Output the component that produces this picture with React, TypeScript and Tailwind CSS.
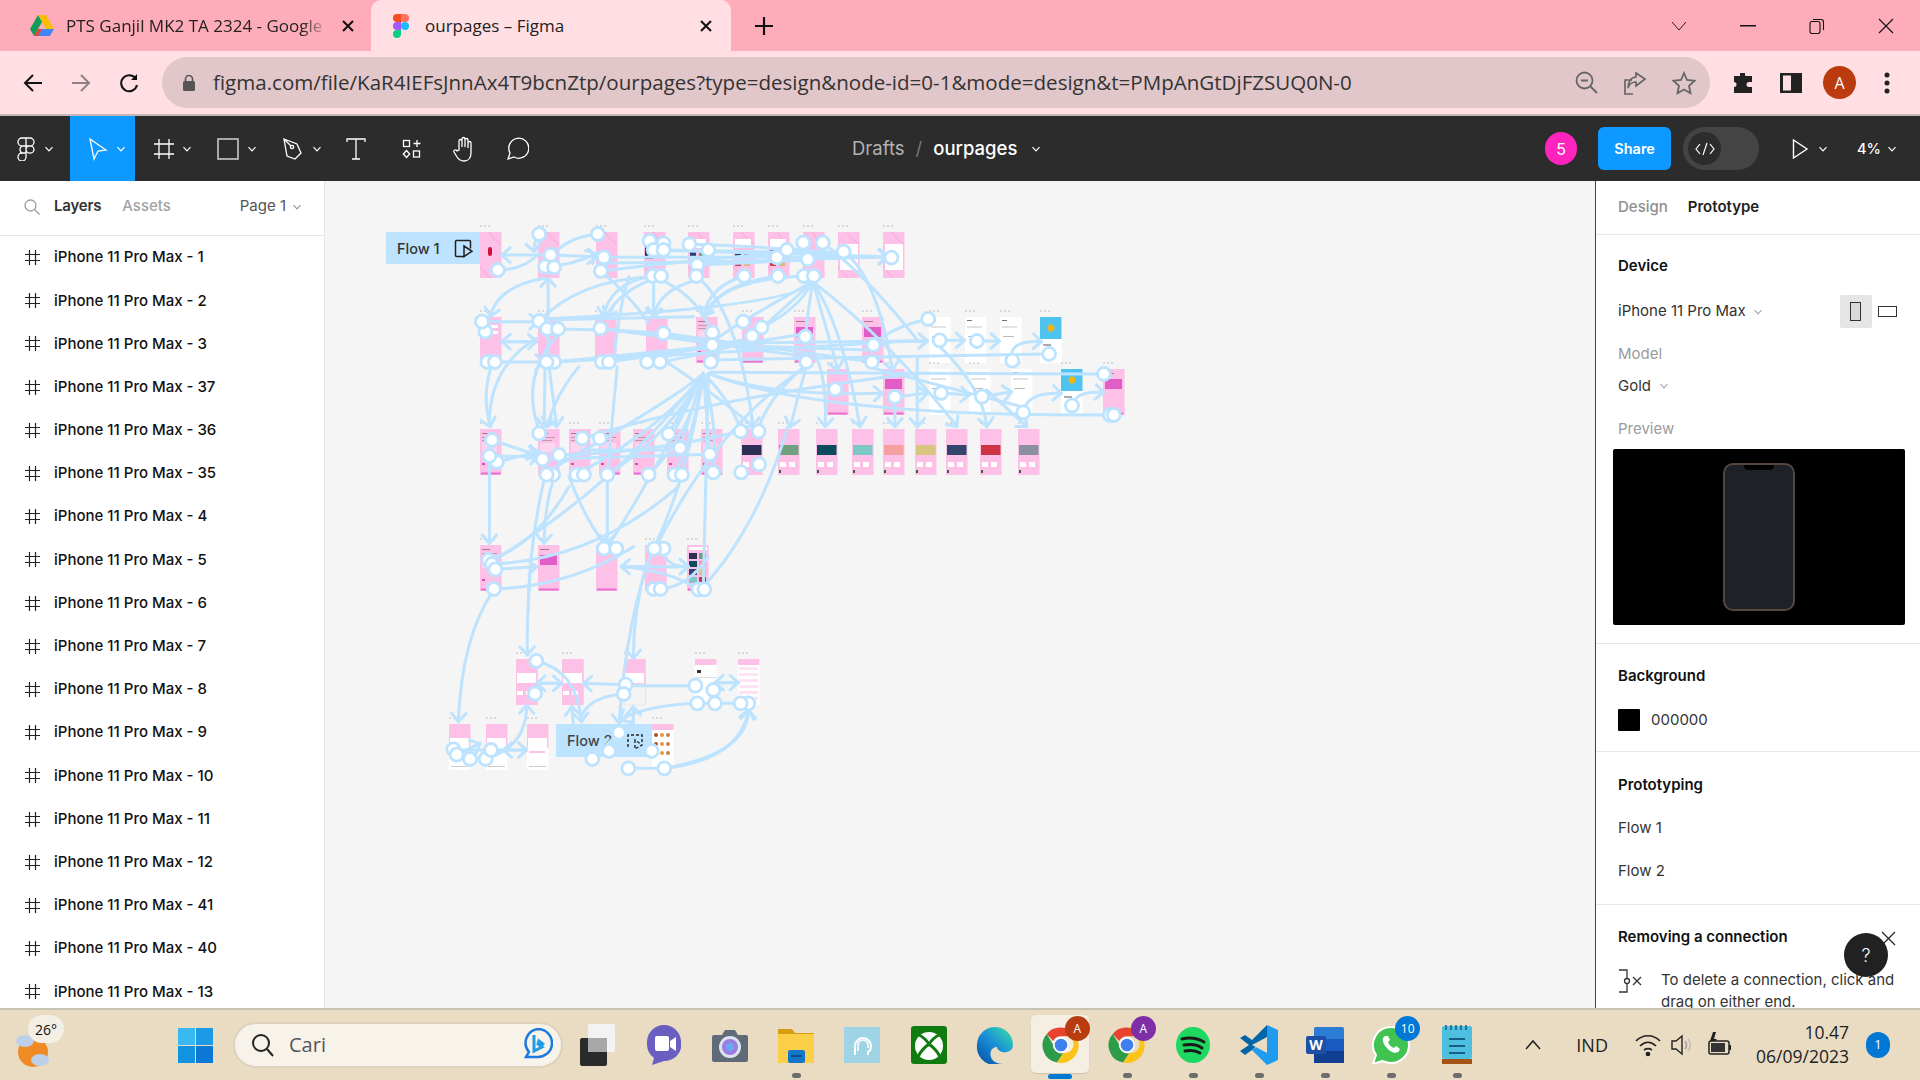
import React from "react";

const sans = "font-['Open_Sans',sans-serif]";
const inter = "font-[Inter,sans-serif]";

type C = [number, number, number, number, number, number, number?];
const z3x = (x: number) => 370 + x / 2.01;
const z3y = (y: number) => 210 + y / 3;
const z5x = (x: number) => 420 + x / 3;
const z5y = (y: number) => 520 + y / 3;

const L = (a: number, b: number, c: number, d: number, arrow = 1): C => [a, b, (a + c) / 2, (b + d) / 2, c, d, arrow];

const curves3: C[] = [
  L(355, 135, 265, 135), [257, 180, 310, 180, 340, 130, 0], [340, 72, 328, 100, 330, 125, 1], [458, 72, 380, 85, 355, 165, 0],
  L(363, 135, 455, 140), [352, 170, 410, 165, 455, 130, 1], L(470, 142, 1040, 142), L(570, 120, 1040, 140), [464, 183, 650, 150, 820, 130, 0],
  L(590, 120, 950, 130, 0), [642, 103, 800, 110, 950, 130, 0], L(880, 148, 1040, 140), L(470, 160, 880, 150, 0), L(660, 165, 880, 150, 0),
  [568, 198, 480, 220, 470, 320, 1], [585, 198, 500, 240, 475, 320, 1], L(570, 205, 570, 320), [656, 210, 580, 240, 570, 320, 1],
  [752, 198, 680, 230, 670, 320, 1], [820, 198, 700, 220, 670, 320, 1], [872, 198, 700, 210, 680, 310, 0], [892, 210, 870, 290, 340, 328, 0],
  [890, 215, 700, 370, 688, 400, 0], [890, 215, 800, 340, 768, 378, 0], [890, 215, 860, 300, 787, 352, 0], [890, 215, 880, 300, 875, 380, 0],
  [890, 215, 950, 350, 985, 650, 1], [890, 215, 930, 420, 940, 480, 1], [890, 215, 1050, 400, 1180, 650, 1], [910, 98, 1000, 200, 1100, 390, 0],
  [952, 125, 1020, 200, 1050, 480, 1], [1122, 327, 1050, 350, 1010, 405, 0], [656, 198, 740, 300, 770, 650, 1], [568, 200, 680, 260, 700, 440, 0],
  [520, 200, 500, 300, 490, 450, 0], [470, 190, 530, 270, 560, 340, 0], [350, 205, 255, 230, 242, 320, 1], L(358, 455, 358, 205), [340, 333, 420, 210, 565, 200, 0],
  L(225, 335, 338, 335), L(340, 330, 650, 320, 0), L(265, 395, 335, 395), L(335, 395, 265, 395), L(251, 456, 350, 456),
  [370, 456, 600, 440, 880, 370, 0], L(370, 456, 750, 400, 0), L(370, 456, 1010, 400, 0), L(378, 357, 460, 360, 0), L(460, 358, 590, 370, 0), L(590, 370, 688, 405, 0), L(688, 400, 1120, 392),
  L(463, 355, 880, 440, 0), L(463, 355, 690, 400, 0), [480, 456, 600, 430, 750, 390, 0], [583, 456, 650, 440, 750, 400, 0], [557, 456, 650, 420, 690, 390, 0],
  L(590, 370, 1010, 456, 0), L(688, 405, 1000, 420, 0), [1012, 405, 1050, 390, 1120, 395, 1], L(1145, 391, 1195, 391), L(1220, 393, 1265, 393),
  [1291, 452, 1280, 390, 1350, 395, 1], L(680, 450, 1365, 432, 0), L(685, 487, 1475, 492, 0), [680, 490, 900, 620, 1487, 615, 0], [680, 490, 800, 560, 1030, 550, 1],
  L(1055, 561, 1120, 549), L(1148, 549, 1205, 555), L(1230, 560, 1290, 545), [1313, 607, 1320, 545, 1390, 550, 1], [1411, 587, 1420, 540, 1475, 548, 1],
  [1145, 410, 1230, 530, 1240, 650, 1], L(1240, 540, 1320, 650), L(1100, 440, 1100, 650), L(1055, 580, 1055, 650), L(1000, 470, 1310, 590, 0),
  [875, 400, 920, 450, 915, 650, 1], [877, 470, 860, 560, 845, 650, 1], [670, 490, 620, 560, 350, 790, 0], [670, 490, 600, 640, 415, 794, 0], [670, 490, 600, 680, 477, 794, 0],
  [670, 490, 640, 680, 560, 794, 0], [670, 490, 650, 680, 612, 794, 0], L(670, 490, 600, 672, 0), L(670, 490, 623, 714, 0), L(670, 490, 683, 733, 0), [670, 490, 700, 650, 690, 787, 0],
  [670, 490, 730, 580, 745, 664, 0], [670, 490, 500, 820, 250, 1050, 0], [670, 490, 640, 800, 570, 1016, 0], [670, 490, 570, 800, 475, 1016, 0], L(680, 490, 670, 1130, 0),
  [880, 460, 800, 560, 780, 660, 0], [877, 470, 700, 640, 575, 1010, 0], [840, 650, 780, 950, 670, 1130, 0], [1100, 490, 700, 560, 440, 680, 0], [600, 460, 700, 560, 770, 650, 1],
  [340, 660, 300, 500, 380, 370, 0], [240, 640, 240, 470, 335, 385, 0], [242, 480, 225, 560, 242, 650, 1], L(352, 460, 350, 650), L(360, 470, 375, 650), [420, 470, 370, 560, 357, 650, 1], L(497, 470, 477, 790, 0),
  L(245, 690, 335, 735), L(240, 738, 340, 740), L(255, 756, 340, 725), L(347, 748, 680, 733, 0), [380, 735, 560, 730, 745, 664, 0], L(427, 720, 600, 720, 0),
  L(240, 738, 240, 1000), [350, 810, 320, 1000, 318, 1200, 0], [368, 810, 350, 900, 350, 1000, 1], [400, 800, 430, 920, 470, 1000, 0], L(477, 810, 477, 1000),
  [238, 1050, 330, 1010, 400, 830, 0], [245, 1062, 450, 1050, 620, 830, 0], L(252, 1078, 335, 1070), [249, 1137, 400, 1130, 530, 1010, 0],
  L(505, 1070, 640, 1070), L(640, 1070, 505, 1070), [590, 1016, 590, 1070, 640, 1070, 1], [584, 1137, 640, 1130, 680, 1040, 0], [660, 1138, 600, 1080, 505, 1070, 0],
];

const curves5: C[] = [
  [222, 208, 125, 350, 115, 605, 1], [330, 160, 320, 300, 322, 405, 1], [700, 85, 620, 290, 597, 610, 1], [680, 130, 640, 270, 640, 415, 1],
  [349, 423, 470, 450, 485, 605, 1], L(350, 490, 425, 490), L(425, 490, 350, 490), L(617, 494, 490, 490), [611, 522, 500, 530, 480, 600, 0], L(826, 497, 640, 497, 0),
  [832, 550, 680, 555, 600, 600, 1], L(962, 550, 832, 550, 0), L(885, 488, 955, 488), L(955, 488, 885, 488), [733, 745, 985, 700, 985, 570, 1], [733, 745, 960, 720, 985, 570, 1],
  L(733, 745, 625, 745, 0), L(100, 690, 320, 690), L(320, 690, 250, 690), L(110, 704, 180, 670), [197, 717, 320, 680, 320, 555, 1], L(460, 610, 455, 560), L(640, 610, 640, 560),
  [567, 693, 600, 640, 640, 600, 0], L(517, 717, 597, 638, 0),
];

const circles3: number[][] = [
  [257,180],[340,72],[458,72],[352,170],[370,172],[363,135],[470,142],[464,183],[562,93],[590,100],[570,120],[590,120],[642,103],[680,120],[658,165],[656,198],[568,198],[585,198],[752,198],[820,198],[818,142],[838,120],[871,98],[910,98],[880,148],[872,198],[892,198],[952,125],[1048,143],
  [232,365],[225,335],[236,456],[251,456],[340,333],[356,357],[378,357],[370,456],[355,456],[463,355],[466,456],[480,456],[590,370],[557,456],[583,456],[688,368],[688,405],[685,456],[750,335],[787,352],[768,378],[875,380],[877,456],[1012,405],[1009,456],[1122,327],[1145,391],[1220,393],[1291,452],[1365,432],
  [935,538],[1055,561],[1148,549],[1230,560],[1313,607],[1411,587],[1475,492],[1487,615],[1495,615],
  [255,756],[245,690],[240,738],[340,670],[347,748],[380,735],[368,794],[355,794],[427,685],[462,685],[415,794],[430,794],[477,794],[600,672],[623,714],[560,794],[612,794],[627,794],[683,733],[690,787],[745,664],[781,664],[782,763],[746,787],
  [238,1050],[245,1062],[252,1078],[249,1137],[470,1016],[495,1016],[590,1016],[571,1016],[570,1137],[584,1137],[660,1138],[672,1138],
];
const circles5: number[][] = [
  [349,423],[345,521],[617,494],[611,522],[826,497],[832,550],[885,550],[985,550],[962,550],[880,510],
  [100,688],[110,704],[150,717],[197,717],[213,690],[597,638],[567,693],[517,717],[695,693],[625,745],[733,745],
];

type F = { x: number; y: number; k?: string; c?: string };
const H = 46;
const W = 21.5;
const frames: F[] = [
  ...[[480,"red"],[538,""],[596,""],[644,"dark"],[688,"list"],[733,"list"],[768,"list"],[803,""],[838,"card"],[883,"card"]].map(([x,k]) => ({ x: x as number, y: 232, k: k as string })),
  ...[[480,"form"],[538,""],[595,""],[646,""],[696,"text"],[742,""],[794,"mag"],[862,"mag"]].map(([x,k]) => ({ x: x as number, y: 317, k: k as string })),
  ...[929,965,1000].map((x) => ({ x, y: 317, k: "white" })),
  { x: 1040, y: 317, k: "blue" },
  { x: 827, y: 369, k: "plain" }, { x: 883, y: 369, k: "mag" },
  ...[929,969,1011].map((x) => ({ x, y: 369, k: "white" })),
  { x: 1061, y: 369, k: "blue" }, { x: 1103, y: 369, k: "mag" },
  ...[480,538,569,599,633,667,701].map((x) => ({ x, y: 429, k: "text" })),
  ...[[741,"#2b2f55"],[778,"#6fa07f"],[816,"#0e4a5e"],[852,"#7fc7c7"],[883,"#f5a0a0"],[915,"#d8c580"],[946,"#33456e"],[980,"#cc3344"],[1018,"#8a90a0"]].map(([x,c]) => ({ x: x as number, y: 429, k: "thumb", c: c as string })),
  { x: 480, y: 545, k: "text" }, { x: 538, y: 545, k: "mag" }, { x: 596, y: 545 }, { x: 645, y: 545 }, { x: 687, y: 545, k: "grid" },
  { x: 516, y: 659, k: "r5" }, { x: 562, y: 659, k: "r5" }, { x: 624, y: 659, k: "r5b" }, { x: 695, y: 659, k: "r5w" }, { x: 738, y: 659, k: "r5l" },
  { x: 449, y: 724, k: "r6" }, { x: 486, y: 724, k: "r6" }, { x: 527, y: 724, k: "r6" }, { x: 652, y: 724, k: "r6f" },
];

function Frame({ x, y, k, c }: F) {
  const dots = [4, 8, 12].map((d) => <circle key={d} cx={x + d - 3} cy={y - 6} r={0.8} fill="#b5b5b5" />);
  const white = k === "white";
  const r6 = k === "r6" || k === "r5w" || k === "r5l" || k === "r6f";
  const strip = !white && k !== "blue" && !r6 && k !== "r5" && k !== "r5b" && k !== "thumb" && y !== 232;
  return (
    <g>
      {dots}
      <rect x={x} y={y} width={W} height={H} fill={white ? "#ffffff" : k === "blue" ? "#ffffff" : r6 ? "#ffffff" : "#fdc0e6"} />
      {y === 232 && <path d={`M${x + 9} ${y}l5 7 7 5M${x} ${y + 34}l5 7 6 5`} fill="none" stroke="#f99cd6" strokeWidth={0.7} />}
      {strip && <rect x={x + 1} y={y + H - 2.5} width={W - 2} height={2} fill="#ea6fd0" />}
      {k === "red" && <rect x={x + 8} y={y + 15} width={4} height={9} rx={2} fill="#d40f3c" />}
      {k === "dark" && <rect x={x + 1} y={y + 14} width={8} height={13} fill="#1b2b49" />}
      {k === "list" && (<g><rect x={x + 2} y={y + 7} width={16} height={9} fill="#fff" /><rect x={x + 2} y={y + 18} width={6} height={6} fill="#2f3d6a" /><rect x={x + 11} y={y + 18} width={6} height={6} fill="#6fa07f" /><rect x={x + 2} y={y + 28} width={6} height={6} fill="#c33f55" /><rect x={x + 11} y={y + 28} width={6} height={6} fill="#d6bd7c" /></g>)}
      {k === "card" && <rect x={x + 2} y={y + 12} width={18} height={26} fill="#ffffff" />}
      {k === "form" && (<g><rect x={x + 3} y={y + 8} width={15} height={3} fill="#fff" /><rect x={x + 3} y={y + 14} width={15} height={3} fill="#fff" /></g>)}
      {k === "text" && (<g><rect x={x + 2} y={y + 4} width={8} height={1} fill="#a78" /><rect x={x + 2} y={y + 8} width={15} height={1} fill="#b9a" /><rect x={x + 2} y={y + 11} width={12} height={1} fill="#b9a" /><rect x={x + 2} y={y + 14} width={15} height={9} fill="#fbd6ee" /><rect x={x + 2} y={y + 34} width={3} height={2} fill="#d94ab0" /></g>)}
      {k === "mag" && (<g><rect x={x + 2} y={y + 4} width={9} height={1} fill="#a78" /><rect x={x + 2} y={y + 10} width={17} height={10} fill="#e05ec6" /></g>)}
      {k === "thumb" && (<g><rect x={x + 1} y={y + 16} width={W - 2} height={10} fill={c} /><rect x={x + 2} y={y + 33} width={6} height={5} fill="#fff" /><rect x={x + 11} y={y + 33} width={6} height={5} fill="#fff" /><rect x={x + 1} y={y + 41} width={2} height={3} fill="#35634a" /></g>)}
      {k === "white" && (<g><rect x={x + 2} y={y + 3} width={5} height={1} fill="#777" /><rect x={x + 2} y={y + 9} width={15} height={2} fill="#e2e2e2" /><rect x={x + 3} y={y + 19} width={11} height={1} fill="#bbb" /></g>)}
      {k === "blue" && (<g><rect x={x} y={y} width={W} height={22} fill="#4fc3f0" /><circle cx={x + 11} cy={y + 11} r={3.5} fill="#f2b50f" /><rect x={x + 2} y={y + 22} width={17} height={2} fill="#fff" /><rect x={x + 3} y={y + 27} width={8} height={2} fill="#aaa" /></g>)}
      {k === "grid" && (<g><rect x={x + 2} y={y + 2} width={18} height={3} fill="#fff" />{[8, 16, 24, 32].map((d, i) => (<g key={d}><rect x={x + 2} y={y + d} width={8} height={6} fill={["#2b2f55", "#0e4a5e", "#33456e", "#7fc7c7"][i]} /><rect x={x + 12} y={y + d} width={7} height={6} fill={["#6fa07f", "#f5a0a0", "#d8c580", "#cc3344"][i]} /></g>))}</g>)}
      {k === "r5" && (<g><rect x={x} y={y} width={W} height={H} fill="#fdc0e6" /><rect x={x + 1} y={y + 14} width={19} height={10} fill="#fff" /><rect x={x + 1} y={y + 32} width={6} height={4} fill="#fff" /><rect x={x + 10} y={y + 32} width={6} height={4} fill="#fff" /></g>)}
      {k === "r5b" && (<g><rect x={x} y={y} width={W} height={25} fill="#fdc0e6" /><rect x={x + 1} y={y + 14} width={19} height={10} fill="#fff" /><rect x={x} y={y + 25} width={W} height={H - 25} fill="#f4f4f4" stroke="#dcdcdc" strokeWidth={0.5} /></g>)}
      {k === "r5w" && (<g><rect x={x} y={y} width={W} height={6} fill="#fdc0e6" /><rect x={x + 2} y={y + 11} width={4} height={3} fill="#333" /><rect x={x} y={y + 18} width={W} height={1} fill="#ddd" /></g>)}
      {k === "r5l" && (<g><rect x={x} y={y} width={W} height={6} fill="#fdc0e6" />{[8, 14, 20, 26, 32, 38].map((d) => <rect key={d} x={x + 1} y={y + d} width={19} height={3} fill="#fde3f4" />)}</g>)}
      {k === "r6" && (<g><rect x={x} y={y} width={W} height={24} fill="#fdc0e6" /><rect x={x + 1} y={y + 14} width={19} height={10} fill="#fff" /><rect x={x + 2} y={y + 27} width={16} height={2} fill="#fdc0e6" /><rect x={x + 2} y={y + 42} width={17} height={1} fill="#ccc" /></g>)}
      {k === "r6f" && (<g><rect x={x} y={y} width={W} height={6} fill="#fdc0e6" />{[11, 20, 29].map((d) => (<g key={d}><circle cx={x + 4} cy={y + d} r={2} fill="#a8502c" /><circle cx={x + 10} cy={y + d} r={2} fill="#e39a3f" /><circle cx={x + 16} cy={y + d} r={2} fill="#c8824e" /></g>))}</g>)}
    </g>
  );
}

function Link({ p }: { p: number[] }) {
  const [a, b, c, d, e, f, arrow] = p;
  const ang = Math.atan2(f - d, e - c);
  const len = 11;
  const s = 0.72;
  const ex = (t: number) => e - len * Math.cos(ang + t);
  const ey = (t: number) => f - len * Math.sin(ang + t);
  return (
    <g>
      <path d={`M${a} ${b}Q${c} ${d} ${e} ${f}`} />
      {arrow ? <path d={`M${ex(s)} ${ey(s)}L${e} ${f}L${ex(-s)} ${ey(-s)}`} /> : null}
    </g>
  );
}

function toFull(c: C, fx: (n: number) => number, fy: (n: number) => number) {
  return [fx(c[0]), fy(c[1]), fx(c[2]), fy(c[3]), fx(c[4]), fy(c[5]), c[6] ?? 0];
}

function Canvas() {
  return (
    <svg viewBox="325 181 1270 827" className="block w-[1270px] h-[827px]">
      {frames.map((f, i) => <Frame key={i} {...f} />)}
      <rect x={386} y={232} width={94} height={32} fill="#bde3ff" />
      <text x={397} y={254} fontFamily="Inter" fontWeight={500} fontSize={14.5} fill="#333">Flow 1</text>
      <path d="M465 256.500h-8.500a1 1 0 0 1-1-1v-14a1 1 0 0 1 1-1h13a1 1 0 0 1 1 1v7M464 246v10.500l8-5.200z" fill="none" stroke="#222" strokeWidth={1.5} />
      <rect x={556} y={724} width={96} height={33} fill="#bde3ff" />
      <text x={567} y={746} fontFamily="Inter" fontWeight={500} fontSize={14.5} fill="#444">Flow 2</text>
      <path d="M628 747v-12h14v8M635 740v9l7-4z" fill="none" stroke="#222" strokeWidth={1.4} strokeDasharray="3 2" />
      <g fill="none" stroke="#bde3ff" strokeWidth={3} strokeLinecap="round" strokeLinejoin="round">
        {curves3.map((c, i) => <Link key={i} p={toFull(c, z3x, z3y)} />)}
        {curves5.map((c, i) => <Link key={i} p={toFull(c, z5x, z5y)} />)}
      </g>
      <g fill="#ffffff" stroke="#bde3ff" strokeWidth={2.800}>
        {circles3.map(([x, y], i) => <circle key={i} cx={z3x(x)} cy={z3y(y)} r={6.5} />)}
        {circles5.map(([x, y], i) => <circle key={i} cx={z5x(x)} cy={z5y(y)} r={6.5} />)}
      </g>
    </svg>
  );
}

const Chev = ({ c = "#fff", s = 10 }: { c?: string; s?: number }) => (
  <svg width={s} height={s} viewBox="0 0 10 10" fill="none" stroke={c} strokeWidth={1.2}><path d="M1.500 3.200 5 6.800l3.500-3.600" /></svg>
);

function ToolIcon({ children, w, pl, gap, chev, className = "" }: { children: React.ReactNode; w: number; pl?: number; gap?: number; chev?: boolean; className?: string }) {
  return (
    <div className={`flex items-center h-full shrink-0 ${pl === undefined ? "justify-center" : ""} ${className}`} style={{ width: w, paddingLeft: pl, gap }}>
      {children}
      {chev && <Chev />}
    </div>
  );
}

function Toolbar() {
  const st = { fill: "none", stroke: "#fff", strokeWidth: 1.3 };
  return (
    <div className={`h-[65px] bg-[#2c2c2c] flex items-center shrink-0 ${inter}`}>
      <ToolIcon w={70} pl={16} gap={8} chev>
        <svg width="20" height="24" viewBox="0 0 20 24" {...st}><path d="M10 1H6a4 4 0 0 0 0 8h4zM10 1h4a4 4 0 0 1 0 8h-4zM10 9H6a4 4 0 0 0 0 7h4zM10 16H6a4 4 0 1 0 4 4zM18 12.500a4 3.600 0 1 1-8 0 4 3.600 0 0 1 8 0z" /></svg>
      </ToolIcon>
      <ToolIcon w={65} pl={18} gap={8} chev className="bg-[#0d99ff]">
        <svg width="20" height="24" viewBox="0 0 20 24" {...st}><path d="M2 2l16 11-8 1-4 8z" /></svg>
      </ToolIcon>
      <ToolIcon w={60} pl={18} gap={7} chev>
        <svg width="22" height="22" viewBox="0 0 22 22" {...st}><path d="M6 1v20M16 1v20M1 6h20M1 16h20" /></svg>
      </ToolIcon>
      <ToolIcon w={64} pl={22} gap={8} chev>
        <svg width="22" height="22" viewBox="0 0 22 22" fill="none" stroke="#c9c9c9" strokeWidth="1.600"><rect x="1" y="1" width="20" height="20" /></svg>
      </ToolIcon>
      <ToolIcon w={64} pl={23} gap={8} chev>
        <svg width="22" height="24" viewBox="0 0 22 24" {...st}><path d="M2 2l13 5 4 9-6 6-8-3zM2 2l7 7" /><circle cx="10" cy="10" r="1.600" /></svg>
      </ToolIcon>
      <ToolIcon w={66}>
        <svg width="20" height="22" viewBox="0 0 20 22" {...st}><path d="M1 4V1h18v3M10 1v20M6 21h8" /></svg>
      </ToolIcon>
      <ToolIcon w={45}>
        <svg width="20" height="20" viewBox="0 0 20 20" {...st}><rect x="1.500" y="1.500" width="6" height="6" /><path d="M15 1v7M11.500 4.500h7" /><path d="M4.500 11.500l3.200 3.500-3.200 3.500L1.300 15z" /><rect x="11.500" y="12" width="6" height="6" /></svg>
      </ToolIcon>
      <ToolIcon w={58}>
        <svg width="24" height="26" viewBox="-2 0 24 26" {...st}><path d="M6 14V5a1.500 1.500 0 0 1 3 0v6V3a1.500 1.500 0 0 1 3 0v8V4a1.500 1.500 0 0 1 3 0v8V7a1.500 1.500 0 0 1 3 0v10c0 5-3 8-7 8-3 0-5-1-7-4l-3-5c-1-2 2-3 3-1z" /></svg>
      </ToolIcon>
      <ToolIcon w={50}>
        <svg width="24" height="24" viewBox="0 0 24 24" {...st}><path d="M3 22l2-6a10 10 0 1 1 4 4z" /></svg>
      </ToolIcon>
      <div className="flex-1 flex items-center pl-[310px] text-[18.500px]">
        <span className="text-[#b3b3b3]">Drafts</span>
        <span className="text-[#777] mx-[11px]">/</span>
        <span className="text-white font-medium">ourpages</span>
        <span className="ml-[14px]"><Chev /></span>
      </div>
      <div className="w-[32px] h-[33px] rounded-full bg-[#ff24bd] text-white text-[16px] flex items-center justify-center mr-[21px]">5</div>
      <div className="w-[73px] h-[43px] rounded-[6px] bg-[#0d99ff] text-white text-[14.500px] font-semibold flex items-center justify-center mr-[12px]">Share</div>
      <div className="w-[76px] h-[43px] rounded-full bg-[#444444] flex items-center pl-[5px] mr-[33px]">
        <div className="w-[33px] h-[33px] rounded-full bg-[#2c2c2c] flex items-center justify-center">
          <svg width="20" height="14" viewBox="0 0 20 14" fill="none" stroke="#fff" strokeWidth="1.200"><path d="M5 2 1 7l4 5M15 2l4 5-4 5M12 1 8 13" /></svg>
        </div>
      </div>
      <svg width="17" height="22" viewBox="0 0 17 22" {...st} strokeWidth={1.4} className="mr-[9px]"><path d="M1.500 2v18L15 11z" /></svg>
      <Chev />
      <span className="text-white text-[14.500px] font-medium ml-[29px] mr-[6px]">4%</span>
      <Chev />
      <div className="w-[23px]" />
    </div>
  );
}

const layers = ["1", "2", "3", "37", "36", "35", "4", "5", "6", "7", "8", "9", "10", "11", "12", "41", "40", "13"];

function LeftPanel() {
  return (
    <div className={`w-[325px] shrink-0 bg-white border-r border-[#e6e6e6] overflow-hidden ${inter}`}>
      <div className="h-[55px] flex items-center border-b border-[#e6e6e6] pl-[24px] pr-[22px] pb-[3px] text-[15px]">
        <svg width="16" height="16" viewBox="0 0 16 16" fill="none" stroke="#9a9a9a" strokeWidth="1.300"><circle cx="6.500" cy="6.500" r="5.500" /><path d="m10.500 10.500 5 5" /></svg>
        <span className="ml-[14px] font-semibold text-[#333] tracking-[-0.2px]">Layers</span>
        <span className="ml-[21px] font-medium text-[#a3a3a3]">Assets</span>
        <span className="ml-auto text-[#555] mr-[6px]">Page 1</span>
        <Chev c="#999" />
      </div>
      {layers.map((n) => (
        <div key={n} className="h-[43.2px] flex items-center pl-[25px] text-[#111] text-[15px] font-medium">
          <svg width="15" height="15" viewBox="0 0 15 15" fill="none" stroke="#222" strokeWidth="1.200" className="mr-[14px] shrink-0"><path d="M4.500 0v15M10.500 0v15M0 4.500h15M0 10.500h15" /></svg>
          iPhone 11 Pro Max - {n}
        </div>
      ))}
    </div>
  );
}

function Section({ children, className = "" }: { children: React.ReactNode; className?: string }) {
  return <div className={`border-b border-[#e6e6e6] ${className}`}>{children}</div>;
}

function RightPanel() {
  return (
    <div className={`relative w-[325px] shrink-0 bg-white border-l border-[#444] overflow-hidden text-[15px] ${inter}`}>
      <div className="h-[54px] flex items-center border-b border-[#e6e6e6] pl-[22px] pb-[1px]">
        <span className="text-[#8f8f8f] font-medium">Design</span>
        <span className="ml-[20px] text-[#222] font-semibold">Prototype</span>
      </div>
      <Section className="h-[409px] pl-[22px] pt-[21px]">
        <div className="font-semibold text-[#111] leading-[20px]">Device</div>
        <div className="flex items-center h-[33px] mt-[19px] relative text-[#333]">
          <span>iPhone 11 Pro Max</span>
          <span className="ml-[7px]"><Chev c="#aaa" /></span>
          <div className="ml-[77px] w-[32px] h-[33px] rounded-[2px] bg-[#e5e5e5] flex items-center justify-center">
            <div className="w-[11px] h-[19px] border-[1.5px] border-[#333] bg-[#d9d9d9]" />
          </div>
          <div className="ml-[6px] w-[19px] h-[11px] border-[1.5px] border-[#333]" />
        </div>
        <div className="text-[#9b9b9b] mt-[16px] leading-[20px]">Model</div>
        <div className="flex items-center mt-[12px] leading-[20px] text-[#333]">Gold<span className="ml-[8px]"><Chev c="#aaa" /></span></div>
        <div className="text-[#9b9b9b] mt-[23px] leading-[20px]">Preview</div>
        <div className="ml-[-5px] mt-[10px] w-[292px] h-[176px] bg-black rounded-[2px] flex items-center justify-center">
          <div className="relative w-[72px] h-[148px] rounded-[10px] border-2 border-[#54463c] bg-[#1e2228]">
            <div className="absolute top-0 left-[19px] w-[30px] h-[5px] bg-black rounded-b-[4px]" />
          </div>
        </div>
      </Section>
      <Section className="h-[108px] pl-[22px] pt-[22px]">
        <div className="font-semibold text-[#111] leading-[20px]">Background</div>
        <div className="flex items-center mt-[23px] text-[#333]">
          <div className="w-[22px] h-[22px] bg-black rounded-[1px]" />
          <span className="ml-[11px]">000000</span>
        </div>
      </Section>
      <Section className="h-[153px] pl-[22px] pt-[23px]">
        <div className="font-semibold text-[#111] leading-[20px]">Prototyping</div>
        <div className="mt-[23px] leading-[20px] text-[#333]">Flow 1</div>
        <div className="mt-[23px] leading-[20px] text-[#333]">Flow 2</div>
      </Section>
      <div className="pl-[22px] pt-[22px]">
        <div className="font-semibold text-[#111] leading-[20px]">Removing a connection</div>
        <div className="flex mt-[22px]">
          <svg width="26" height="24" viewBox="0 0 26 24" fill="none" stroke="#333" strokeWidth="1.300" className="shrink-0"><path d="M1 1h8v22H1" /><circle cx="9" cy="12" r="2.500" fill="#fff" /><path d="m15 8 8 8M23 8l-8 8" /></svg>
          <div className="ml-[17px] w-[240px] leading-[22px] text-[#333]">To delete a connection, click and drag on either end.</div>
        </div>
      </div>
      <svg width="15" height="15" viewBox="0 0 15 15" stroke="#222" strokeWidth="1.200" className="absolute left-[285px] top-[750px]"><path d="m1 1 13 13M14 1 1 14" /></svg>
      <div className="absolute left-[248px] top-[752px] w-[44px] h-[44px] rounded-full bg-[#212121] text-white text-[18px] font-light flex items-center justify-center">?</div>
    </div>
  );
}

function Slot({ children, dot, active }: { children: React.ReactNode; dot?: boolean; active?: boolean }) {
  return (
    <div className="relative w-[66.100px] h-full flex items-center justify-center shrink-0">
      {active && <div className="absolute left-[3px] top-[5px] w-[58px] h-[58px] rounded-[5px] bg-[#f5eee2] shadow-[0_1px_1px_rgba(0,0,0,0.12)]" />}
      <div className="relative">{children}</div>
      {dot && <div className="absolute bottom-[2px] left-[29px] w-[9px] h-[5px] rounded-full bg-[#6d6d6d]" />}
      {active && <div className="absolute bottom-[1px] left-[20px] w-[24px] h-[5px] rounded-full bg-[#0078d4]" />}
    </div>
  );
}

const ChromeIcon = ({ s = 38 }: { s?: number }) => (
  <svg width={s} height={s} viewBox="0 0 48 48">
    <path d="M24 2a22 22 0 0 1 19 11H24a11 11 0 0 0-10 6L6 10A22 22 0 0 1 24 2z" fill="#e8432f" />
    <path d="M6 10l8 13.500a11 11 0 0 0 13 11L19 46A22 22 0 0 1 6 10z" fill="#2d9c49" />
    <path d="M43 13a22 22 0 0 1-24 33l8-12a11 11 0 0 0 6-21z" fill="#fcc419" />
    <circle cx="24" cy="24" r="9" fill="#3f7fef" stroke="#fff" strokeWidth="2" />
  </svg>
);

const Badge = ({ t, c }: { t: string; c: string }) => (
  <div className="absolute -top-[10px] -right-[10px] w-[25px] h-[25px] rounded-full text-white text-[12px] flex items-center justify-center" style={{ background: c }}>{t}</div>
);

function Taskbar() {
  return (
    <div className={`h-[72px] shrink-0 border-t-2 border-[#c9c4b2] bg-[#e9dcc2] flex items-center relative ${sans}`}>
      <div className="relative w-[178px] h-full shrink-0">
        <svg width="40" height="50" viewBox="0 0 40 50" className="absolute left-[14px] top-[14px]">
          <circle cx="19" cy="28" r="15" fill="#f08a24" />
          <ellipse cx="11" cy="17" rx="9" ry="6" fill="#bcd0ea" />
          <ellipse cx="26" cy="36" rx="9" ry="6" fill="#bcd0ea" />
        </svg>
        <div className="absolute left-[28px] top-[5px] w-[36px] h-[28px] rounded-full bg-[#f4efe4] text-[#111] text-[14px] flex items-center justify-center">26°</div>
      </div>
      <div className="w-[55px] shrink-0">
        <svg width="35" height="35" viewBox="0 0 35 35">
          <rect width="17" height="17" fill="#39b9f2" /><rect x="18" width="17" height="17" fill="#1c9ae6" />
          <rect y="18" width="17" height="17" fill="#1193e2" /><rect x="18" y="18" width="17" height="17" fill="#0a78d4" />
        </svg>
      </div>
      <div className="w-[330px] h-[46px] shrink-0 rounded-full bg-[#f8f3ea] border-2 border-[#ddd2bd] flex items-center pl-[16px] pr-[8px] text-[#555] text-[20px]">
        <svg width="24" height="24" viewBox="0 0 24 24" fill="none" stroke="#222" strokeWidth="2"><circle cx="10" cy="10" r="8" /><path d="m16 16 6 7" /></svg>
        <span className="ml-[14px]">Cari</span>
        <svg width="30" height="34" viewBox="0 0 30 34" className="ml-auto" fill="none"><path d="M15 1a14 14 0 0 1 14 14c0 10-9 14-14 14H3l3-5A14 14 0 0 1 15 1z" stroke="#1b7ae0" strokeWidth="2.500" /><path d="M11 7v16l8-4-4-3 1-3 5 4" stroke="#1f9ce8" strokeWidth="3" /></svg>
      </div>
      <div className="w-[2px] shrink-0" />
      <div className="flex h-full items-center">
        <Slot>
          <svg width="36" height="42" viewBox="0 0 36 42"><rect x="8" y="0" width="27" height="28" rx="2" fill="#f3f3f3" /><rect x="0" y="14" width="27" height="28" rx="2" fill="#2b2b2b" /><rect x="8" y="14" width="19" height="14" fill="#a8a8a8" /></svg>
        </Slot>
        <Slot>
          <svg width="34" height="40" viewBox="0 0 34 40"><path d="M17 0a17 17 0 0 1 17 17v6a17 17 0 0 1-17 13L5 40l2-7A17 17 0 0 1 0 20v-3A17 17 0 0 1 17 0z" fill="#6a5fc1" /><rect x="8" y="11" width="14" height="15" rx="2" fill="#fff" /><path d="m23 16 6-4v14l-6-4z" fill="#fff" /></svg>
        </Slot>
        <Slot>
          <svg width="36" height="36" viewBox="0 0 36 36"><path d="M2 8h8l3-5h10l3 5h8a2 2 0 0 1 2 2v23a2 2 0 0 1-2 2H2a2 2 0 0 1-2-2V10a2 2 0 0 1 2-2z" fill="#5f6b78" /><circle cx="18" cy="20" r="11" fill="#dbe4ef" /><circle cx="18" cy="20" r="8" fill="#9b7de0" /><circle cx="18" cy="20" r="4" fill="#6aa9f2" /></svg>
        </Slot>
        <Slot dot>
          <svg width="36" height="36" viewBox="0 0 36 36"><path d="M0 2h14l3 4h19v30H0z" fill="#d69e0f" /><rect y="7" width="36" height="29" fill="#fbcf48" /><rect x="10" y="23" width="17" height="13" rx="2" fill="#1277c9" /><rect x="13" y="28" width="11" height="2" fill="#0a4f8f" /></svg>
        </Slot>
        <Slot>
          <svg width="36" height="36" viewBox="0 0 36 36" fill="none"><rect width="36" height="36" fill="#9fd4e6" /><path d="M11 28v-9a8 8 0 0 1 16 0c0 3-1 5-3 6v3" stroke="#fff" strokeWidth="2" /><path d="M14 24v-6a5 5 0 0 1 10 0v3" stroke="#fff" strokeWidth="1.500" /></svg>
        </Slot>
        <Slot>
          <svg width="36" height="38" viewBox="0 0 36 38" fill="none"><path d="M3 0h30a3 3 0 0 1 3 3v32a3 3 0 0 1-3 3H3a3 3 0 0 1-3-3V3a3 3 0 0 1 3-3z" fill="#107c10" /><circle cx="18" cy="20" r="14" fill="#fff" /><path d="M8 9c4 2 8 6 10 9 2-3 6-7 10-9M7 31c2-5 7-10 11-13 4 3 9 8 11 13" stroke="#107c10" strokeWidth="3" /></svg>
        </Slot>
        <Slot>
          <svg width="38" height="38" viewBox="0 0 38 38">
            <defs><linearGradient id="edgeg" x1="0.900" y1="0.100" x2="0.200" y2="0.900"><stop offset="0" stopColor="#35d3b0" /><stop offset="0.500" stopColor="#1a8fd8" /><stop offset="1" stopColor="#0b5fb0" /></linearGradient></defs>
            <path d="M1 19A18 18 0 0 1 37 19c0 6-6 8-11 7-3-1-5-3-5-5-4 0-8 4-6 10 1 4 6 7 12 7-3 1-5 1-8 1A18 18 0 0 1 1 19z" fill="url(#edgeg)" />
          </svg>
        </Slot>
        <Slot active>
          <div><ChromeIcon /><Badge t="A" c="#b83c10" /></div>
        </Slot>
        <Slot dot>
          <div><ChromeIcon /><Badge t="A" c="#7e2fa8" /></div>
        </Slot>
        <Slot dot>
          <svg width="34" height="36" viewBox="0 0 34 36" fill="none"><ellipse cx="17" cy="18" rx="17" ry="18" fill="#1ed760" /><path d="M6 12c8-2 15-1 22 3M8 18c6-1 13-1 18 3M9 24c5-1 10-1 15 2" stroke="#1a1a1a" strokeWidth="3" strokeLinecap="round" /></svg>
        </Slot>
        <Slot dot>
          <svg width="38" height="40" viewBox="0 0 38 40"><path d="M27 0l11 5v30l-11 5-15-15 15-10z" fill="#1f9cf0" /><path d="M27 0v12L12 25l-7 5-5-4 9-6-9-7 5-3 7 5z" fill="#0065a9" /><path d="M27 12v16l-15-8z" fill="#e9dcc2" /></svg>
        </Slot>
        <Slot dot>
          <svg width="38" height="36" viewBox="0 0 38 36"><rect x="8" width="30" height="36" rx="2" fill="#2b7cd3" /><rect x="8" y="12" width="30" height="12" fill="#185abd" /><rect x="8" y="24" width="30" height="12" fill="#103f91" /><rect y="9" width="20" height="18" rx="2" fill="#1e4fa8" /><text x="10" y="23" fontSize="14" fontWeight="700" fill="#fff" textAnchor="middle" fontFamily="Open Sans">W</text></svg>
        </Slot>
        <Slot dot>
          <div>
            <svg width="38" height="38" viewBox="0 0 38 38"><path d="M19 1a18 18 0 0 1 0 36c-3 0-6-1-9-2l-9 3 3-9A18 18 0 0 1 19 1z" fill="#40c351" stroke="#fff" strokeWidth="2" /><path d="M13 10c-3 2-3 6 1 11s9 7 12 5c2-1 2-3 1-4l-3-2-2 2c-3-1-5-3-6-6l2-2-2-4z" fill="#fff" /></svg>
            <Badge t="10" c="#0078d4" />
          </div>
        </Slot>
        <Slot dot>
          <svg width="30" height="40" viewBox="0 0 30 40"><rect y="1" width="30" height="33" rx="2" fill="#4dbfe0" /><rect y="34" width="30" height="5" fill="#a55316" /><path d="M7 14h16M7 21h16M7 28h16" stroke="#155f80" strokeWidth="2" /><path d="M4 0v5M9 0v5M14 0v5M19 0v5M24 0v5" stroke="#155f80" strokeWidth="1.500" /></svg>
        </Slot>
      </div>
      <svg width="18" height="12" viewBox="0 0 18 12" fill="none" stroke="#222" strokeWidth="1.500" className="ml-[34px]"><path d="m2 10 7-8 7 8" /></svg>
      <span className="ml-[34px] text-[18px] text-[#222]">IND</span>
      <svg width="26" height="24" viewBox="0 0 26 24" fill="none" stroke="#222" strokeWidth="1.700" className="ml-[27px]"><path d="M1 8c7-7 17-7 24 0M5 13c5-5 11-5 16 0M9 17c3-2 5-2 8 0" /><circle cx="13" cy="21" r="1.500" fill="#222" /></svg>
      <svg width="24" height="24" viewBox="0 0 24 24" fill="none" stroke="#222" strokeWidth="1.400" className="ml-[9px]"><path d="M2 8h4l6-5v18l-6-5H2z" /><path d="M15 8c2 2 2 6 0 8" stroke="#999" /><path d="M18 6c3 3 3 9 0 12" stroke="#bbb" /></svg>
      <svg width="24" height="28" viewBox="0 0 24 28" className="ml-[14px]"><path d="M5 1 2 10h3l-2 6 6-8H6l2-7z" fill="#222" /><rect x="1" y="10" width="20" height="13" rx="2" fill="#e9dcc2" stroke="#222" strokeWidth="1.500" /><rect x="3" y="12" width="14" height="9" fill="#333" /><rect x="21" y="14" width="2" height="5" fill="#222" /></svg>
      <div className="ml-auto text-right text-[#222] text-[17.500px] leading-[24px] mr-[17px] -mt-[2px]">
        <div>10.47</div>
        <div>06/09/2023</div>
      </div>
      <div className="w-[24px] h-[26px] rounded-full bg-[#0078d4] text-white text-[13px] flex items-center justify-center mr-[30px]">1</div>
    </div>
  );
}

function Browser() {
  return (
    <>
      <div className={`h-[51px] shrink-0 bg-[#ffacba] flex items-stretch relative text-[#222] ${sans}`}>
        <div className="w-[371px] flex items-center pl-[30px]">
          <svg width="24" height="22" viewBox="0 0 24 22" className="shrink-0">
            <path d="M8 0h8l8 14h-8z" fill="#fbbc04" /><path d="M8 0 0 14l4 7 8-14z" fill="#0f9d58" /><path d="M4 21h16l4-7H8z" fill="#4285f4" /><path d="M4 21l4-7h4l-4 7z" fill="#ea4335" />
          </svg>
          <span className="ml-[12px] w-[262px] text-[17px] whitespace-nowrap [mask-image:linear-gradient(to_right,black_90%,transparent)]">PTS Ganjil MK2 TA 2324 - Google</span>
          <svg width="14" height="14" viewBox="0 0 14 14" stroke="#111" strokeWidth="2" className="ml-[13px]"><path d="m2 2 10 10M12 2 2 12" /></svg>
        </div>
        <div className="w-[360px] mt-0 rounded-t-[10px] bg-[#ffdfe4] flex items-center pl-[22px] pr-[18px]">
          <svg width="16" height="24" viewBox="0 0 16 24"><path d="M8 0H4a4 4 0 0 0 0 8h4z" fill="#f24e1e" /><path d="M8 0h4a4 4 0 0 1 0 8H8z" fill="#ff7262" /><path d="M8 8H4a4 4 0 0 0 0 8h4z" fill="#a259ff" /><circle cx="12" cy="12" r="4" fill="#1abcfe" /><path d="M4 16h4v4a4 4 0 1 1-4-4z" fill="#0acf83" /></svg>
          <span className="ml-[16px] text-[17px]">ourpages – Figma</span>
          <svg width="14" height="14" viewBox="0 0 14 14" stroke="#111" strokeWidth="2" className="ml-auto"><path d="m2 2 10 10M12 2 2 12" /></svg>
        </div>
        <div className="ml-[23px] self-center">
          <svg width="20" height="20" viewBox="0 0 20 20" stroke="#111" strokeWidth="2.200"><path d="M10 1v18M1 10h18" /></svg>
        </div>
        <div className="ml-auto flex items-center">
          <svg width="16" height="10" viewBox="0 0 16 10" fill="none" stroke="#222" strokeWidth="1"><path d="m1 1 7 8 7-8" /></svg>
          <svg width="16" height="2" viewBox="0 0 16 2" className="ml-[53px]"><rect width="16" height="1.500" fill="#111" /></svg>
          <svg width="16" height="16" viewBox="0 0 16 16" fill="none" stroke="#111" strokeWidth="1.100" className="ml-[53px]"><rect x="1" y="3.500" width="10" height="12" rx="2" /><path d="M4 1.500h8a2.500 2.500 0 0 1 2.500 2.500v8" /></svg>
          <svg width="16" height="16" viewBox="0 0 16 16" fill="none" stroke="#111" strokeWidth="1.100" className="ml-[53px] mr-[26px]"><path d="m1 1 14 14M15 1 1 15" /></svg>
        </div>
      </div>
      <div className={`h-[65px] shrink-0 bg-[#ffdfe4] border-b-2 border-[#c9b5b9] flex items-center ${sans}`}>
        <div className="w-[162px] flex items-center shrink-0 pl-[23px]">
          <svg width="20" height="20" viewBox="0 0 20 20" fill="none" stroke="#111" strokeWidth="2"><path d="M19 10H2M10 2l-8 8 8 8" /></svg>
          <svg width="20" height="20" viewBox="0 0 20 20" fill="none" stroke="#8e8083" strokeWidth="2" className="ml-[28px]"><path d="M1 10h17M10 2l8 8-8 8" /></svg>
          <svg width="20" height="20" viewBox="0 0 20 20" fill="none" stroke="#111" strokeWidth="2" className="ml-[28px]"><path d="M17 6a8 8 0 1 0 1 6" /><path d="M18 1v6h-6z" fill="#111" stroke="none" /></svg>
        </div>
        <div className="w-[1548px] h-[51px] rounded-full bg-[#e1c6ca] flex items-center pl-[20px] pr-[14px] shrink-0">
          <svg width="14" height="16" viewBox="0 0 14 16" fill="#555"><rect x="1" y="6" width="12" height="10" rx="1.500" /><path d="M3.500 6V4a3.500 3.500 0 0 1 7 0v2" fill="none" stroke="#555" strokeWidth="1.600" /></svg>
          <span className="ml-[17px] text-[20.540px] text-[#333] whitespace-nowrap">figma.com/file/KaR4IEFsJnnAx4T9bcnZtp/ourpages?type=design&amp;node-id=0-1&amp;mode=design&amp;t=PMpAnGtDjFZSUQ0N-0</span>
          <div className="ml-auto flex items-center gap-[25px]">
            <svg width="23" height="23" viewBox="0 0 23 23" fill="none" stroke="#666" strokeWidth="1.800"><circle cx="9.500" cy="9.500" r="8" /><path d="m15 15 7 7M6 9.500h7" /></svg>
            <svg width="24" height="24" viewBox="0 0 24 24" fill="none" stroke="#666" strokeWidth="1.700"><path d="M10 23H2V9h7M13 2l9 6-9 7v-4c-4 0-7 2-8 6 0-6 3-11 8-11z" /></svg>
            <svg width="24" height="24" viewBox="0 0 24 24" fill="none" stroke="#666" strokeWidth="1.800"><path d="m12 2 3 7 7.500.8-5.500 5 1.500 7.400L12 18.500l-6.500 3.700L7 14.800l-5.500-5L9 9z" /></svg>
          </div>
        </div>
        <svg width="24" height="24" viewBox="0 0 24 24" fill="#222" className="ml-[21px] shrink-0"><path d="M9 2h5v3a2 2 0 0 1 2 0h5v6h-3a2.500 2.500 0 0 0 0 5h3v6H3v-6a2.500 2.500 0 0 0 0-5V5h6z" /></svg>
        <svg width="22" height="20" viewBox="0 0 22 20" className="ml-[25px] shrink-0"><rect width="22" height="20" fill="#222" /><rect x="3" y="2.500" width="8" height="15" fill="#ffdfe4" /></svg>
        <div className="ml-[21px] w-[33px] h-[33px] rounded-full bg-[#b93b0e] text-white text-[16px] flex items-center justify-center shrink-0">A</div>
        <svg width="6" height="24" viewBox="0 0 6 24" fill="#222" className="ml-[28px] shrink-0"><circle cx="3" cy="4" r="2.500" /><circle cx="3" cy="12" r="2.500" /><circle cx="3" cy="20" r="2.500" /></svg>
      </div>
    </>
  );
}

export default function App() {
  return (
    <div className="w-[1920px] h-[1080px] flex flex-col overflow-hidden bg-[#f5f5f5]">
      <Browser />
      <Toolbar />
      <div className="flex-1 flex min-h-0">
        <LeftPanel />
        <div className="flex-1 bg-[#f5f5f5] overflow-hidden"><Canvas /></div>
        <RightPanel />
      </div>
      <Taskbar />
    </div>
  );
}
